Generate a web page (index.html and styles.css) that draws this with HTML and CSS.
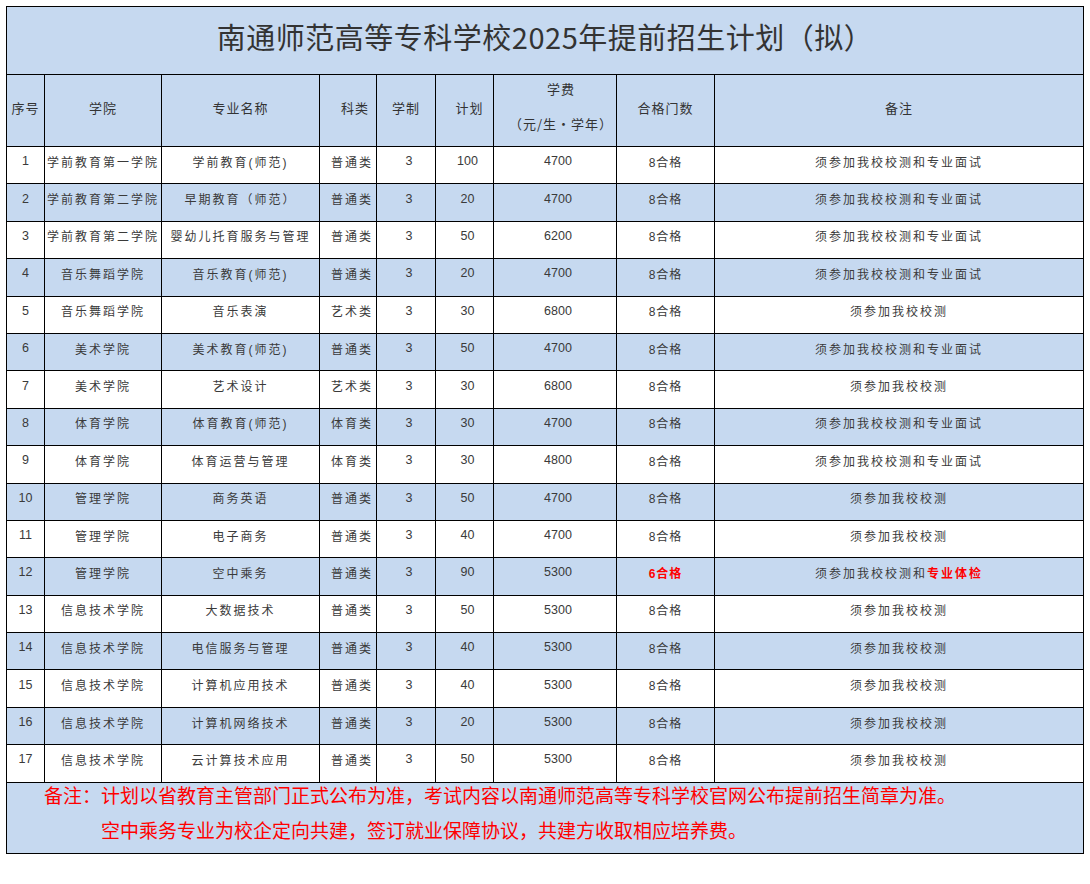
FILE: index.html
```html
<!DOCTYPE html>
<html lang="zh-CN">
<head>
<meta charset="utf-8">
<title>南通师范高等专科学校2025年提前招生计划（拟）</title>
<link rel="stylesheet" href="styles.css">
</head>
<body>
<table class="plan">
  <colgroup>
    <col class="c1"><col class="c2"><col class="c3"><col class="c4"><col class="c5"><col class="c6"><col class="c7"><col class="c8"><col class="c9">
  </colgroup>
  <thead>
    <tr class="title-row"><th colspan="9" class="title">南通师范高等专科学校2025年提前招生计划（拟）</th></tr>
    <tr class="head-row">
      <th>序号</th><th>学院</th><th>专业名称</th><th class="kind">科类</th><th>学制</th><th class="numh">计划</th>
      <th class="fee"><div class="fee-top">学费</div><div class="fee-bottom">（元/生・学年）</div></th><th>合格门数</th><th>备注</th>
    </tr>
  </thead>
  <tbody>
    <tr><td class="idx">1</td><td>学前教育第一学院</td><td>学前教育(师范)</td><td class="kind">普通类</td><td class="num">3</td><td class="num">100</td><td class="num">4700</td><td class="pass">8合格</td><td>须参加我校校测和专业面试</td></tr>
    <tr class="alt"><td class="idx">2</td><td>学前教育第二学院</td><td>早期教育（师范）</td><td class="kind">普通类</td><td class="num">3</td><td class="num">20</td><td class="num">4700</td><td class="pass">8合格</td><td>须参加我校校测和专业面试</td></tr>
    <tr><td class="idx">3</td><td>学前教育第二学院</td><td>婴幼儿托育服务与管理</td><td class="kind">普通类</td><td class="num">3</td><td class="num">50</td><td class="num">6200</td><td class="pass">8合格</td><td>须参加我校校测和专业面试</td></tr>
    <tr class="alt"><td class="idx">4</td><td>音乐舞蹈学院</td><td>音乐教育(师范)</td><td class="kind">普通类</td><td class="num">3</td><td class="num">20</td><td class="num">4700</td><td class="pass">8合格</td><td>须参加我校校测和专业面试</td></tr>
    <tr><td class="idx">5</td><td>音乐舞蹈学院</td><td>音乐表演</td><td class="kind">艺术类</td><td class="num">3</td><td class="num">30</td><td class="num">6800</td><td class="pass">8合格</td><td>须参加我校校测</td></tr>
    <tr class="alt"><td class="idx">6</td><td>美术学院</td><td>美术教育(师范)</td><td class="kind">普通类</td><td class="num">3</td><td class="num">50</td><td class="num">4700</td><td class="pass">8合格</td><td>须参加我校校测和专业面试</td></tr>
    <tr><td class="idx">7</td><td>美术学院</td><td>艺术设计</td><td class="kind">艺术类</td><td class="num">3</td><td class="num">30</td><td class="num">6800</td><td class="pass">8合格</td><td>须参加我校校测</td></tr>
    <tr class="alt"><td class="idx">8</td><td>体育学院</td><td>体育教育(师范)</td><td class="kind">体育类</td><td class="num">3</td><td class="num">30</td><td class="num">4700</td><td class="pass">8合格</td><td>须参加我校校测和专业面试</td></tr>
    <tr><td class="idx">9</td><td>体育学院</td><td>体育运营与管理</td><td class="kind">体育类</td><td class="num">3</td><td class="num">30</td><td class="num">4800</td><td class="pass">8合格</td><td>须参加我校校测和专业面试</td></tr>
    <tr class="alt"><td class="idx">10</td><td>管理学院</td><td>商务英语</td><td class="kind">普通类</td><td class="num">3</td><td class="num">50</td><td class="num">4700</td><td class="pass">8合格</td><td>须参加我校校测</td></tr>
    <tr><td class="idx">11</td><td>管理学院</td><td>电子商务</td><td class="kind">普通类</td><td class="num">3</td><td class="num">40</td><td class="num">4700</td><td class="pass">8合格</td><td>须参加我校校测</td></tr>
    <tr class="alt"><td class="idx">12</td><td>管理学院</td><td>空中乘务</td><td class="kind">普通类</td><td class="num">3</td><td class="num">90</td><td class="num">5300</td><td class="pass"><span class="red">6合格</span></td><td>须参加我校校测和<span class="red">专业体检</span></td></tr>
    <tr><td class="idx">13</td><td>信息技术学院</td><td>大数据技术</td><td class="kind">普通类</td><td class="num">3</td><td class="num">50</td><td class="num">5300</td><td class="pass">8合格</td><td>须参加我校校测</td></tr>
    <tr class="alt"><td class="idx">14</td><td>信息技术学院</td><td>电信服务与管理</td><td class="kind">普通类</td><td class="num">3</td><td class="num">40</td><td class="num">5300</td><td class="pass">8合格</td><td>须参加我校校测</td></tr>
    <tr><td class="idx">15</td><td>信息技术学院</td><td>计算机应用技术</td><td class="kind">普通类</td><td class="num">3</td><td class="num">40</td><td class="num">5300</td><td class="pass">8合格</td><td>须参加我校校测</td></tr>
    <tr class="alt"><td class="idx">16</td><td>信息技术学院</td><td>计算机网络技术</td><td class="kind">普通类</td><td class="num">3</td><td class="num">20</td><td class="num">5300</td><td class="pass">8合格</td><td>须参加我校校测</td></tr>
    <tr><td class="idx">17</td><td>信息技术学院</td><td>云计算技术应用</td><td class="kind">普通类</td><td class="num">3</td><td class="num">50</td><td class="num">5300</td><td class="pass">8合格</td><td>须参加我校校测</td></tr>
  </tbody>
  <tfoot>
    <tr class="foot-row">
      <td colspan="9" class="foot">
        <div class="line first">备注：计划以省教育主管部门正式公布为准，考试内容以南通师范高等专科学校官网公布提前招生简章为准。</div>
        <div class="line second">空中乘务专业为校企定向共建，签订就业保障协议，共建方收取相应培养费。</div>
      </td>
    </tr>
  </tfoot>
</table>
</body>
</html>
```

FILE: styles.css
```css
html, body {
  background: #ffffff;
}
body {
  margin: 6px;
  font-family: "Liberation Sans", "Noto Sans CJK SC", sans-serif;
  color: #333333;
}
.plan {
  border-collapse: collapse;
  table-layout: fixed;
  width: 1077px;
}
.c1 { width: 38px; }
.c2 { width: 117px; }
.c3 { width: 158px; }
.c4 { width: 57px; }
.c5 { width: 59px; }
.c6 { width: 58px; }
.c7 { width: 123px; }
.c8 { width: 98px; }
.c9 { width: 369px; }

.plan th,
.plan td {
  border: 1px solid #000000;
  padding: 0;
  text-align: center;
  vertical-align: middle;
  white-space: nowrap;
  overflow: hidden;
}
.title-row { height: 68px; }
.plan th.title {
  background: #c6d9f0;
  font-family: "Noto Sans CJK SC", sans-serif;
  font-weight: 400;
  font-size: 29px;
  letter-spacing: 0.5px;
  color: #333333;
  padding-bottom: 9px;
}
.head-row { height: 72px; }
.head-row th {
  background: #c6d9f0;
  font-family: "Noto Sans CJK SC", sans-serif;
  font-weight: 400;
  font-size: 13px;
  letter-spacing: 1px;
  color: #333333;
  padding-bottom: 6px;
}
.plan .head-row th.kind {
  text-align: right;
  padding-right: 7px;
}
.plan .head-row th.numh { padding-left: 10px; }
.plan .head-row th.fee {
  vertical-align: top;
  padding: 0 0 0 12px;
}
.fee-top { line-height: 28px; }
.fee-bottom { line-height: 42px; }

tbody tr { height: 37.4px; }
tbody tr.alt td { background: #c6d9f0; }
.plan tbody td {
  font-size: 12px;
  letter-spacing: 2px;
  color: #3a3a3a;
  padding-bottom: 8px;
}
.plan tbody td.idx { letter-spacing: 0; font-size: 12.5px; }
.plan tbody td.num { letter-spacing: 0; font-size: 12.5px; padding-left: 6px; }
.plan tbody td.kind { text-align: right; padding-right: 3px; }
.plan tbody td.pass { letter-spacing: 1px; }
.red {
  color: #ff0000;
  font-weight: 700;
}

.foot-row { height: 71px; }
.plan td.foot {
  background: #c6d9f0;
  text-align: left;
  vertical-align: top;
  font-family: "Noto Sans CJK SC", sans-serif;
  font-size: 19px;
  color: #ff0000;
  padding: 0 0 0 37px;
}
.line.first { line-height: 24px; }
.line.second { line-height: 46px; padding-left: 57px; }
```
